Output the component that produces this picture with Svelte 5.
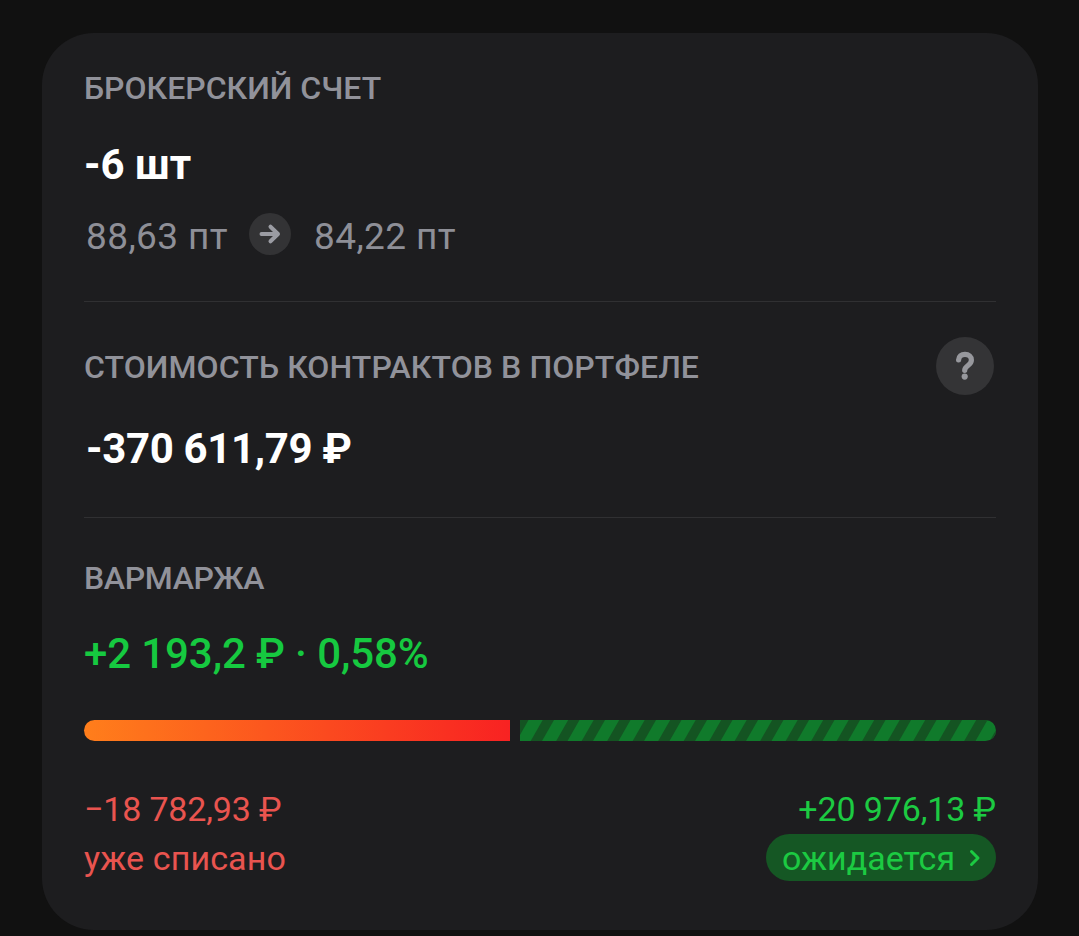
<script lang="ts">
  const quantity = "-6 шт";
  const priceFrom = "88,63 пт";
  const priceTo = "84,22 пт";
  const contractsValue = "-370 611,79 ₽";
  const margin = { total: "+2 193,2 ₽ · 0,58%", charged: "−18 782,93 ₽", pending: "+20 976,13 ₽" };

  // left edges of the dark stripes inside the pending bar
  const stripes = Array.from({ length: 20 }, (_, i) => -2.8 + i * 25.5);
</script>

<main class="card">
  <section class="account">
    <h2>БРОКЕРСКИЙ СЧЕТ</h2>
    <p class="value qty">{quantity}</p>
    <div class="prices">
      <span>{priceFrom}</span>
      <span class="arrow">
        <svg width="42" height="42" viewBox="0 0 42 42">
          <path d="M12.5 21H29M21.5 13.7L29 21L21.5 28.3" />
        </svg>
      </span>
      <span>{priceTo}</span>
    </div>
  </section>

  <section class="contracts">
    <div class="row">
      <h2 class="long">СТОИМОСТЬ КОНТРАКТОВ В ПОРТФЕЛЕ</h2>
      <button class="help" aria-label="Справка">
        <svg width="58" height="58" viewBox="0 0 58 58">
          <path d="M22.6 23C22.8 19.4 25.3 17.4 29 17.4C32.8 17.4 35.4 19.7 35.4 23C35.4 25.6 34 27 32 28.5C29.9 30.1 28.7 31.4 28.7 33.3" />
          <circle cx="28.7" cy="39.6" r="3.1" />
        </svg>
      </button>
    </div>
    <p class="value sum">{contractsValue}</p>
  </section>

  <section class="margin">
    <h2 class="short">ВАРМАРЖА</h2>
    <p class="value total">{margin.total}</p>

    <div class="bar">
      <div class="charged"></div>
      <svg class="pending" width="476" height="21" viewBox="0 0 476 21">
        {#each stripes as x}
          <path d="M{x} 0h11.3l-12 21h-11.3z" />
        {/each}
      </svg>
    </div>

    <div class="row amounts">
      <div class="red">
        <p class="minus">{margin.charged}</p>
        <p class="note">уже списано</p>
      </div>
      <div class="green">
        <p class="plus">{margin.pending}</p>
        <button class="pill">
          <span>ожидается</span>
          <svg width="12" height="18" viewBox="0 0 12 18">
            <path d="M2.5 2.5L9 9L2.5 15.5" />
          </svg>
        </button>
      </div>
    </div>
  </section>
</main>

<style>
  :global(body) {
    margin: 0;
    background: #111111;
    font-family: Roboto, sans-serif;
  }

  .card {
    box-sizing: border-box;
    width: 996px;
    height: 897px;
    margin: 33px 0 0 42px;
    padding: 0 42px;
    border-radius: 52px;
    background: #1d1d1f;
    overflow: hidden;
  }

  :global(#app) {
    display: flow-root;
    height: 936px;
    overflow: hidden;
  }

  section {
    box-sizing: border-box;
    white-space: nowrap;
  }

  .account {
    height: 269px;
    padding-top: 35px;
    border-bottom: 1px solid #303032;
  }

  .contracts {
    height: 216px;
    padding-top: 35px;
    border-bottom: 1px solid #303032;
  }

  .margin {
    padding-top: 40px;
  }

  h2,
  p {
    margin: 0;
  }

  h2 {
    font-size: 32px;
    font-weight: 500;
    line-height: 40px;
    color: #91929a;
  }

  .long {
    padding-top: 1px;
    letter-spacing: 0.08px;
  }

  .short {
    letter-spacing: -0.35px;
  }

  .value {
    font-size: 42px;
    font-weight: 700;
    line-height: 50px;
    color: #ffffff;
  }

  .qty {
    margin-top: 32px;
  }

  .prices {
    display: flex;
    align-items: flex-start;
    margin: 25px 0 0 2px;
    font-size: 37px;
    line-height: 44px;
    letter-spacing: 0.4px;
    color: #8e8f97;
  }

  .arrow {
    display: flex;
    margin: -2px 23px 0 21px;
    border-radius: 50%;
    background: #333335;
  }

  .arrow path {
    fill: none;
    stroke: #9b9ca3;
    stroke-width: 4;
    stroke-linecap: round;
    stroke-linejoin: round;
  }

  .row {
    display: flex;
    align-items: center;
    justify-content: space-between;
  }

  button {
    display: flex;
    padding: 0;
    border: 0;
    font: inherit;
    color: inherit;
    cursor: pointer;
  }

  .help {
    margin-right: 2px;
    border-radius: 50%;
    background: #343436;
  }

  .help path {
    fill: none;
    stroke: #97989d;
    stroke-width: 5.2;
    stroke-linecap: round;
  }

  .help circle {
    fill: #97989d;
  }

  .sum {
    margin: 29px 0 0 2px;
    letter-spacing: -0.35px;
  }

  .total {
    margin-top: 31px;
    font-weight: 500;
    letter-spacing: -0.1px;
    color: #16c940;
  }

  .bar {
    display: flex;
    gap: 10px;
    height: 21px;
    margin-top: 41px;
  }

  .charged {
    width: 426px;
    border-radius: 11px 0 0 11px;
    background: linear-gradient(90deg, #ff7e1b, #f82222);
  }

  .pending {
    border-radius: 0 11px 11px 0;
    background: #107a2b;
  }

  .pending path {
    fill: #145422;
  }

  .amounts {
    align-items: flex-start;
    margin-top: 46px;
    font-size: 34px;
    line-height: 44px;
  }

  .red {
    color: #e9544f;
  }

  .minus {
    letter-spacing: -0.17px;
  }

  .note {
    margin-top: 5px;
    letter-spacing: 0.12px;
  }

  .green {
    display: flex;
    flex-direction: column;
    align-items: flex-end;
    color: #1cca42;
  }

  .plus {
    letter-spacing: -0.12px;
  }

  .pill {
    box-sizing: border-box;
    align-items: center;
    justify-content: space-between;
    width: 230px;
    height: 47px;
    margin-top: 3px;
    padding: 0 15px 0 16px;
    border-radius: 24px;
    background: #155724;
  }

  .pill path {
    fill: none;
    stroke: #1cca42;
    stroke-width: 3;
    stroke-linecap: round;
    stroke-linejoin: round;
  }
</style>
